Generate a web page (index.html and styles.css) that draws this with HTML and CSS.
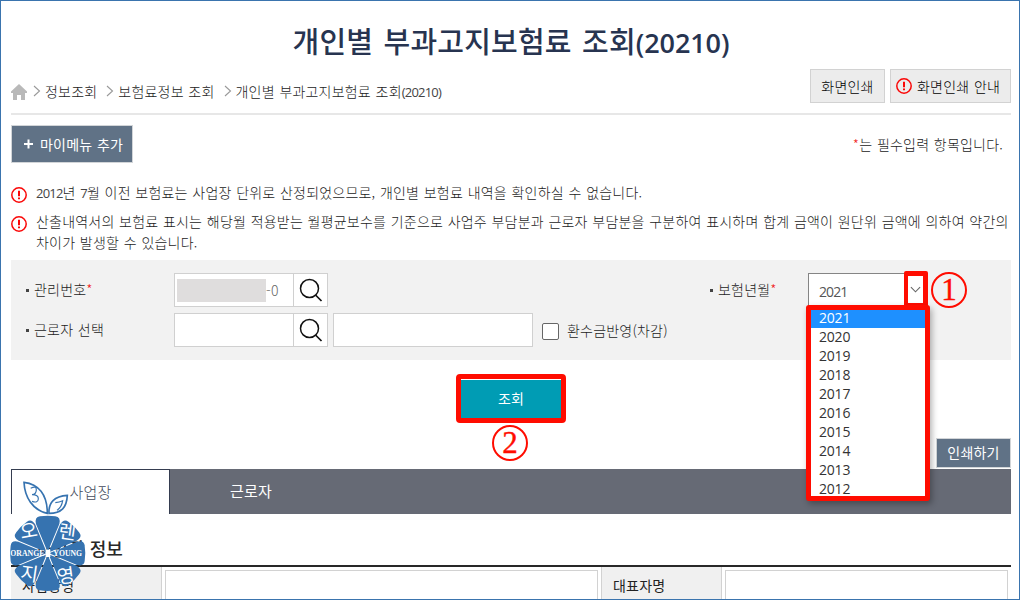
FILE: index.html
```
<!DOCTYPE html>
<html lang="ko">
<head>
    <meta charset="UTF-8">
    <meta name="viewport" content="width=device-width, initial-scale=1.0">
    <title>개인별 부과고지보험료 조회(20210)</title>
    <link rel="stylesheet" href="styles.css">
</head>
<body>
    <svg width="0" height="0" class="defs">
        <symbol id="warn" viewBox="0 0 16 16">
            <circle cx="8" cy="8" r="7.2" fill="none" stroke="#fa0808" stroke-width="1.5"/>
            <path d="M8 3.8v5.4M8 10.6v1.6" stroke="#fa0808" stroke-width="2"/>
        </symbol>
        <symbol id="search" viewBox="0 0 34 32">
            <circle cx="15.5" cy="14.5" r="9" fill="none" stroke="#111" stroke-width="1.5"/>
            <path d="M21.5 21l6 6" stroke="#111" stroke-width="1.7"/>
        </symbol>
        <symbol id="chev" viewBox="0 0 8 12">
            <path d="M1 1l5.5 5L1 11" fill="none" stroke="#999" stroke-width="1.1"/>
        </symbol>
    </svg>

    <div class="page">
        <h1 class="title">개인별 부과고지보험료 조회<span class="title-num">(20210)</span></h1>

        <div class="topbar">
            <div class="breadcrumb">
                <svg class="home" viewBox="0 0 16 16"><path d="M8 0L0 7.6V9h2v7h4v-5h4v5h4V9h2V7.6z" fill="#b9b9b9"/></svg>
                <svg class="chev chev-first"><use href="#chev"/></svg>
                <span>정보조회</span>
                <svg class="chev"><use href="#chev"/></svg>
                <span>보험료정보 조회</span>
                <svg class="chev"><use href="#chev"/></svg>
                <span>개인별 부과고지보험료 조회<span class="num">(20210)</span></span>
            </div>
            <div class="print-buttons">
                <button class="btn-light">화면인쇄</button>
                <button class="btn-light btn-guide"><svg class="warn"><use href="#warn"/></svg>화면인쇄 안내</button>
            </div>
        </div>

        <div class="menu-row">
            <button class="btn-slate btn-menu"><svg class="plus" viewBox="0 0 9 10"><path d="M0 5h9M4.5 .5v9" stroke="#fff" stroke-width="2"/></svg>마이메뉴 추가</button>
            <p class="required-note"><em>*</em>는 필수입력 항목입니다.</p>
        </div>

        <ul class="notices">
            <li><svg class="warn"><use href="#warn"/></svg><p><span class="num">2012</span>년 <span class="num">7</span>월 이전 보험료는 사업장 단위로 산정되었으므로, 개인별 보험료 내역을 확인하실 수 없습니다.</p></li>
            <li><svg class="warn"><use href="#warn"/></svg><p>산출내역서의 보험료 표시는 해당월 적용받는 월평균보수를 기준으로 사업주 부담분과 근로자 부담분을 구분하여 표시하며 합계 금액이 원단위 금액에 의하여 약간의<br>차이가 발생할 수 있습니다.</p></li>
        </ul>

        <div class="search-box">
            <div class="field-row">
                <label class="label-main">관리번호<em>*</em></label>
                <div class="lookup">
                    <div class="input"><span class="masked"></span>-0</div>
                    <button><svg class="search"><use href="#search"/></svg></button>
                </div>
                <label class="label-year">보험년월<em>*</em></label>
                <div class="select">
                    <span>2021</span>
                    <div class="select-arrow"><svg viewBox="0 0 12 7"><path d="M1 1l5 5 5-5" fill="none" stroke="#666" stroke-width="1.2"/></svg></div>
                    <svg class="step step-one" viewBox="0 0 38 38"><circle cx="19" cy="19" r="17" /><text x="19" y="29">1</text></svg>
                    <ul class="options">
                        <li class="selected">2021</li>
                        <li>2020</li>
                        <li>2019</li>
                        <li>2018</li>
                        <li>2017</li>
                        <li>2016</li>
                        <li>2015</li>
                        <li>2014</li>
                        <li>2013</li>
                        <li>2012</li>
                    </ul>
                </div>
            </div>
            <div class="field-row">
                <label class="label-main">근로자 선택</label>
                <div class="lookup">
                    <div class="input"></div>
                    <button><svg class="search"><use href="#search"/></svg></button>
                </div>
                <div class="input worker-name"></div>
                <span class="checkbox"></span>
                <span class="check-label">환수금반영(차감)</span>
            </div>
        </div>

        <div class="submit-area">
            <button class="btn-submit">조회</button>
            <svg class="step step-two" viewBox="0 0 38 38"><circle cx="19" cy="19" r="17"/><text x="19" y="29">2</text></svg>
            <button class="btn-slate btn-print">인쇄하기</button>
        </div>

        <div class="tabs">
            <div class="tab active">사업장</div>
            <div class="tab">근로자</div>
        </div>

        <h2 class="section-title">사업장 정보</h2>
        <div class="info-table">
            <div class="th th-first">사업장명</div>
            <div class="td td-first"><div class="cell-input"></div></div>
            <div class="th th-second">대표자명</div>
            <div class="td td-second"><div class="cell-input"></div></div>
        </div>

        <svg class="logo" viewBox="24 54 240 345">
            <defs>
                <path id="petal" d="M143 276L108 192Q103 171 120 169Q143 165 166 169Q183 171 178 192Z"/>
            </defs>
            <g class="leaves">
                <path d="M72 67C115 72 142 103 142 160C98 151 74 112 72 67Z"/>
                <path d="M202 106C163 108 145 128 147 160C185 160 200 142 202 106Z"/>
                <path class="thin" d="M92 85q18-9 17 5t-13 14q20 0 19 13t-19 7"/>
                <path class="thin" d="M166 128q12-2 22-6q-3 20-17 29"/>
            </g>
            <g fill="#3673b0">
                <use href="#petal"/>
                <use href="#petal" transform="rotate(45 143 280)"/>
                <use href="#petal" transform="rotate(90 143 280)"/>
                <use href="#petal" transform="rotate(135 143 280)"/>
                <use href="#petal" transform="rotate(180 143 280)"/>
                <use href="#petal" transform="rotate(225 143 280)"/>
                <use href="#petal" transform="rotate(270 143 280)"/>
                <use href="#petal" transform="rotate(315 143 280)"/>
            </g>
            <rect x="137" y="269" width="14" height="22" fill="#fff"/>
            <g class="logo-ko">
                <text x="86" y="233" transform="rotate(-10 86 212)">오</text>
                <text x="202" y="236" transform="rotate(8 202 215)">렌</text>
                <text x="88" y="362" transform="rotate(8 88 340)">지</text>
                <text x="197" y="368" transform="rotate(-8 197 345)">영</text>
            </g>
            <g class="logo-en">
                <text x="31" y="288" textLength="102" lengthAdjust="spacingAndGlyphs">ORANGE</text>
                <text x="160" y="288" textLength="86" lengthAdjust="spacingAndGlyphs">YOUNG</text>
            </g>
        </svg>
    </div>
</body>
</html>
```
FILE: styles.css
```
* {
    box-sizing: border-box;
    margin: 0;
    padding: 0;
}
body {
    font-family: "Noto Sans CJK KR", sans-serif;
    font-size: 14px;
    font-weight: 300;
    letter-spacing: 0.2px;
    word-spacing: 0.5px;
    color: #222;
    background: #fff;
}
button {
    font: inherit;
    letter-spacing: inherit;
    word-spacing: inherit;
    color: inherit;
}
em {
    font-style: normal;
    color: #f02020;
}
ul {
    list-style: none;
}
.defs {
    position: absolute;
}
.page {
    position: relative;
    width: 1020px;
    height: 600px;
    overflow: hidden;
    border: 1px solid #3a74ae;
    padding: 0 8px 0 10px;
}
.num {
    font-family: "Open Sans", sans-serif;
    font-size: 13px;
    font-weight: 400;
    letter-spacing: -0.8px;
    color: #444;
}
.title {
    height: 68px;
    padding-top: 18px;
    line-height: 42px;
    font-size: 29px;
    font-weight: 500;
    letter-spacing: 0.2px;
    word-spacing: 2px;
    text-align: center;
    color: #273450;
}
.title-num {
    font-family: "Open Sans", sans-serif;
    font-size: 27px;
    font-weight: 600;
    letter-spacing: -0.1px;
}
.topbar {
    display: flex;
    justify-content: space-between;
    height: 46px;
    border-bottom: 2px solid #e7e7e7;
}
.breadcrumb {
    display: flex;
    align-items: center;
    height: 43px;
}
.home {
    width: 16px;
    height: 16px;
    margin-top: 3px;
}
.chev {
    width: 8px;
    height: 12px;
    margin: 1px 4px 0 9px;
}
.chev-first {
    margin-left: 6px;
}
.print-buttons {
    display: flex;
    gap: 5px;
}
.btn-light {
    width: 75px;
    height: 34px;
    border: 1px solid #d2d2d2;
    background: #ececec;
    color: #000;
}
.btn-guide {
    display: flex;
    align-items: center;
    padding-left: 5px;
    gap: 5px;
    width: 121px;
}
.warn {
    flex: none;
    width: 16px;
    height: 16px;
}
.menu-row {
    display: flex;
    justify-content: space-between;
    padding-top: 10px;
    height: 67px;
}
.btn-slate {
    border: 1px solid #d2d5d8;
    background: #607286;
    color: #fff;
    font-weight: 400;
}
.btn-menu {
    display: flex;
    align-items: center;
    padding-left: 12px;
    gap: 7px;
    width: 122px;
    height: 38px;
}
.plus {
    width: 9px;
    height: 10px;
}
.required-note {
    padding-right: 8px;
    line-height: 39px;
}
.notices li {
    display: flex;
    gap: 9px;
    line-height: 21px;
    margin-bottom: 7px;
    white-space: nowrap;
}
.notices .warn {
    margin-top: 5px;
}
.notices p {
    height: 100%;
}
.search-box {
    display: flex;
    flex-direction: column;
    gap: 6px;
    height: 100px;
    padding: 13px 0 0 15px;
    background: #f2f2f2;
}
.field-row {
    display: flex;
    height: 34px;
    line-height: 32px;
}
.field-row label::before {
    content: "";
    display: inline-block;
    width: 3px;
    height: 3px;
    margin-right: 5px;
    vertical-align: 3px;
    background: #444;
}
.label-main {
    width: 148px;
}
.label-year {
    width: 98px;
    margin-left: 382px;
}
.lookup {
    display: flex;
    width: 154px;
    border: 1px solid #d0d0d0;
    background: #fff;
}
.lookup .input {
    display: flex;
    align-items: center;
    width: 118px;
    padding-left: 2px;
    color: #666;
}
.masked {
    width: 89px;
    height: 23px;
    background: #dfdddd;
}
.lookup button {
    width: 34px;
    border: 0;
    border-left: 1px solid #d0d0d0;
    background: #fff;
}
.search {
    display: block;
    width: 34px;
    height: 32px;
}
.worker-name {
    width: 200px;
    margin-left: 5px;
    border: 1px solid #d0d0d0;
    background: #fff;
}
.checkbox {
    width: 17px;
    height: 17px;
    margin: 10px 8px 0 9px;
    border: 1px solid #666;
    border-radius: 2px;
    background: #fff;
}
.check-label {
    line-height: 34px;
}
.select {
    position: relative;
    width: 120px;
    padding-left: 10px;
    line-height: 36px;
    border: 1px solid #858585;
    background: #fff;
    font-family: "Open Sans", sans-serif;
    font-weight: 400;
    letter-spacing: -0.9px;
    color: #555;
}
.select-arrow {
    position: absolute;
    top: -3px;
    right: -1px;
    display: flex;
    align-items: center;
    justify-content: center;
    width: 24px;
    height: 37px;
    border: 5px solid #ff0c00;
    border-left-width: 4px;
    border-radius: 2px;
}
.select-arrow svg {
    flex: none;
    width: 11px;
    height: 7px;
}
.options {
    position: absolute;
    z-index: 2;
    top: 31px;
    left: -3px;
    width: 124px;
    height: 196px;
    border: 5px solid #ff0c00;
    border-radius: 3px;
    background: #fff;
    box-shadow: 2px 3px 6px rgba(0, 0, 0, 0.3);
    letter-spacing: -0.2px;
    color: #333;
    overflow: hidden;
}
.options li {
    height: 19px;
    padding-left: 8px;
    line-height: 18px;
}
.options .selected {
    height: 18px;
    line-height: 16px;
    background: #1e90ff;
    color: #fff;
}
.step {
    position: absolute;
    width: 38px;
    height: 38px;
}
.step circle {
    fill: none;
    stroke: #ff0c00;
    stroke-width: 2;
}
.step text {
    fill: #ff0c00;
    stroke: #ff0c00;
    stroke-width: 0.4;
    font-family: "Liberation Serif", serif;
    font-size: 31px;
    font-weight: 400;
    letter-spacing: 0;
    text-anchor: middle;
}
.step-one {
    top: -3px;
    left: 121px;
}
.step-two {
    left: 480px;
    top: 64px;
}
.submit-area {
    position: relative;
    display: flex;
    height: 109px;
    padding-top: 14px;
    justify-content: space-between;
}
.btn-submit {
    width: 110px;
    height: 49px;
    margin-left: 445px;
    padding-bottom: 2px;
    border: 5px solid #ff0c00;
    border-radius: 4px;
    background: #009cb4;
    box-shadow: inset 0 1px #fff;
    color: #fff;
    font-weight: 400;
}
.btn-print {
    align-self: flex-end;
    width: 75px;
    height: 30px;
    margin-bottom: 1px;
    padding-bottom: 2px;
}
.tabs {
    display: flex;
    height: 45px;
    background: #666a75;
}
.tab {
    width: 162px;
    line-height: 43px;
    font-size: 15px;
    text-align: center;
    font-weight: 400;
    color: #fff;
}
.tab.active {
    width: 159px;
    border: 1px solid #353d50;
    border-bottom: 0;
    background: #fff;
    font-weight: 300;
    color: #444b5c;
}
.section-title {
    height: 53px;
    padding: 20px 0 0 24px;
    line-height: 28px;
    font-size: 18px;
    font-weight: 500;
    border-bottom: 2px solid #282828;
    color: #282828;
    letter-spacing: 0;
    word-spacing: 0;
}
.info-table {
    display: flex;
}
.th {
    height: 40px;
    padding-left: 11px;
    line-height: 37px;
    font-weight: 400;
    background: #f0f0f0;
    border-right: 1px solid #d2d2d2;
}
.th-first {
    width: 151px;
}
.th-second {
    width: 121px;
    border-left: 1px solid #d2d2d2;
}
.td {
    padding: 3px;
}
.td-first {
    width: 439px;
}
.td-second {
    width: 289px;
}
.cell-input {
    height: 34px;
    border: 1px solid #d2d2d2;
}
.logo {
    position: absolute;
    left: 7px;
    top: 477px;
    width: 80px;
    height: 115px;
}
.leaves path {
    fill: #fff;
    stroke: #3673b0;
    stroke-width: 5;
}
.leaves .thin {
    fill: none;
    stroke-width: 3.5;
}
.logo-ko {
    fill: #fff;
    font-size: 57px;
    font-weight: 400;
    letter-spacing: 0;
    text-anchor: middle;
}
.logo-en {
    fill: #fff;
    font-family: "Liberation Serif", serif;
    font-size: 23px;
    font-weight: 700;
    letter-spacing: 0;
}
```
